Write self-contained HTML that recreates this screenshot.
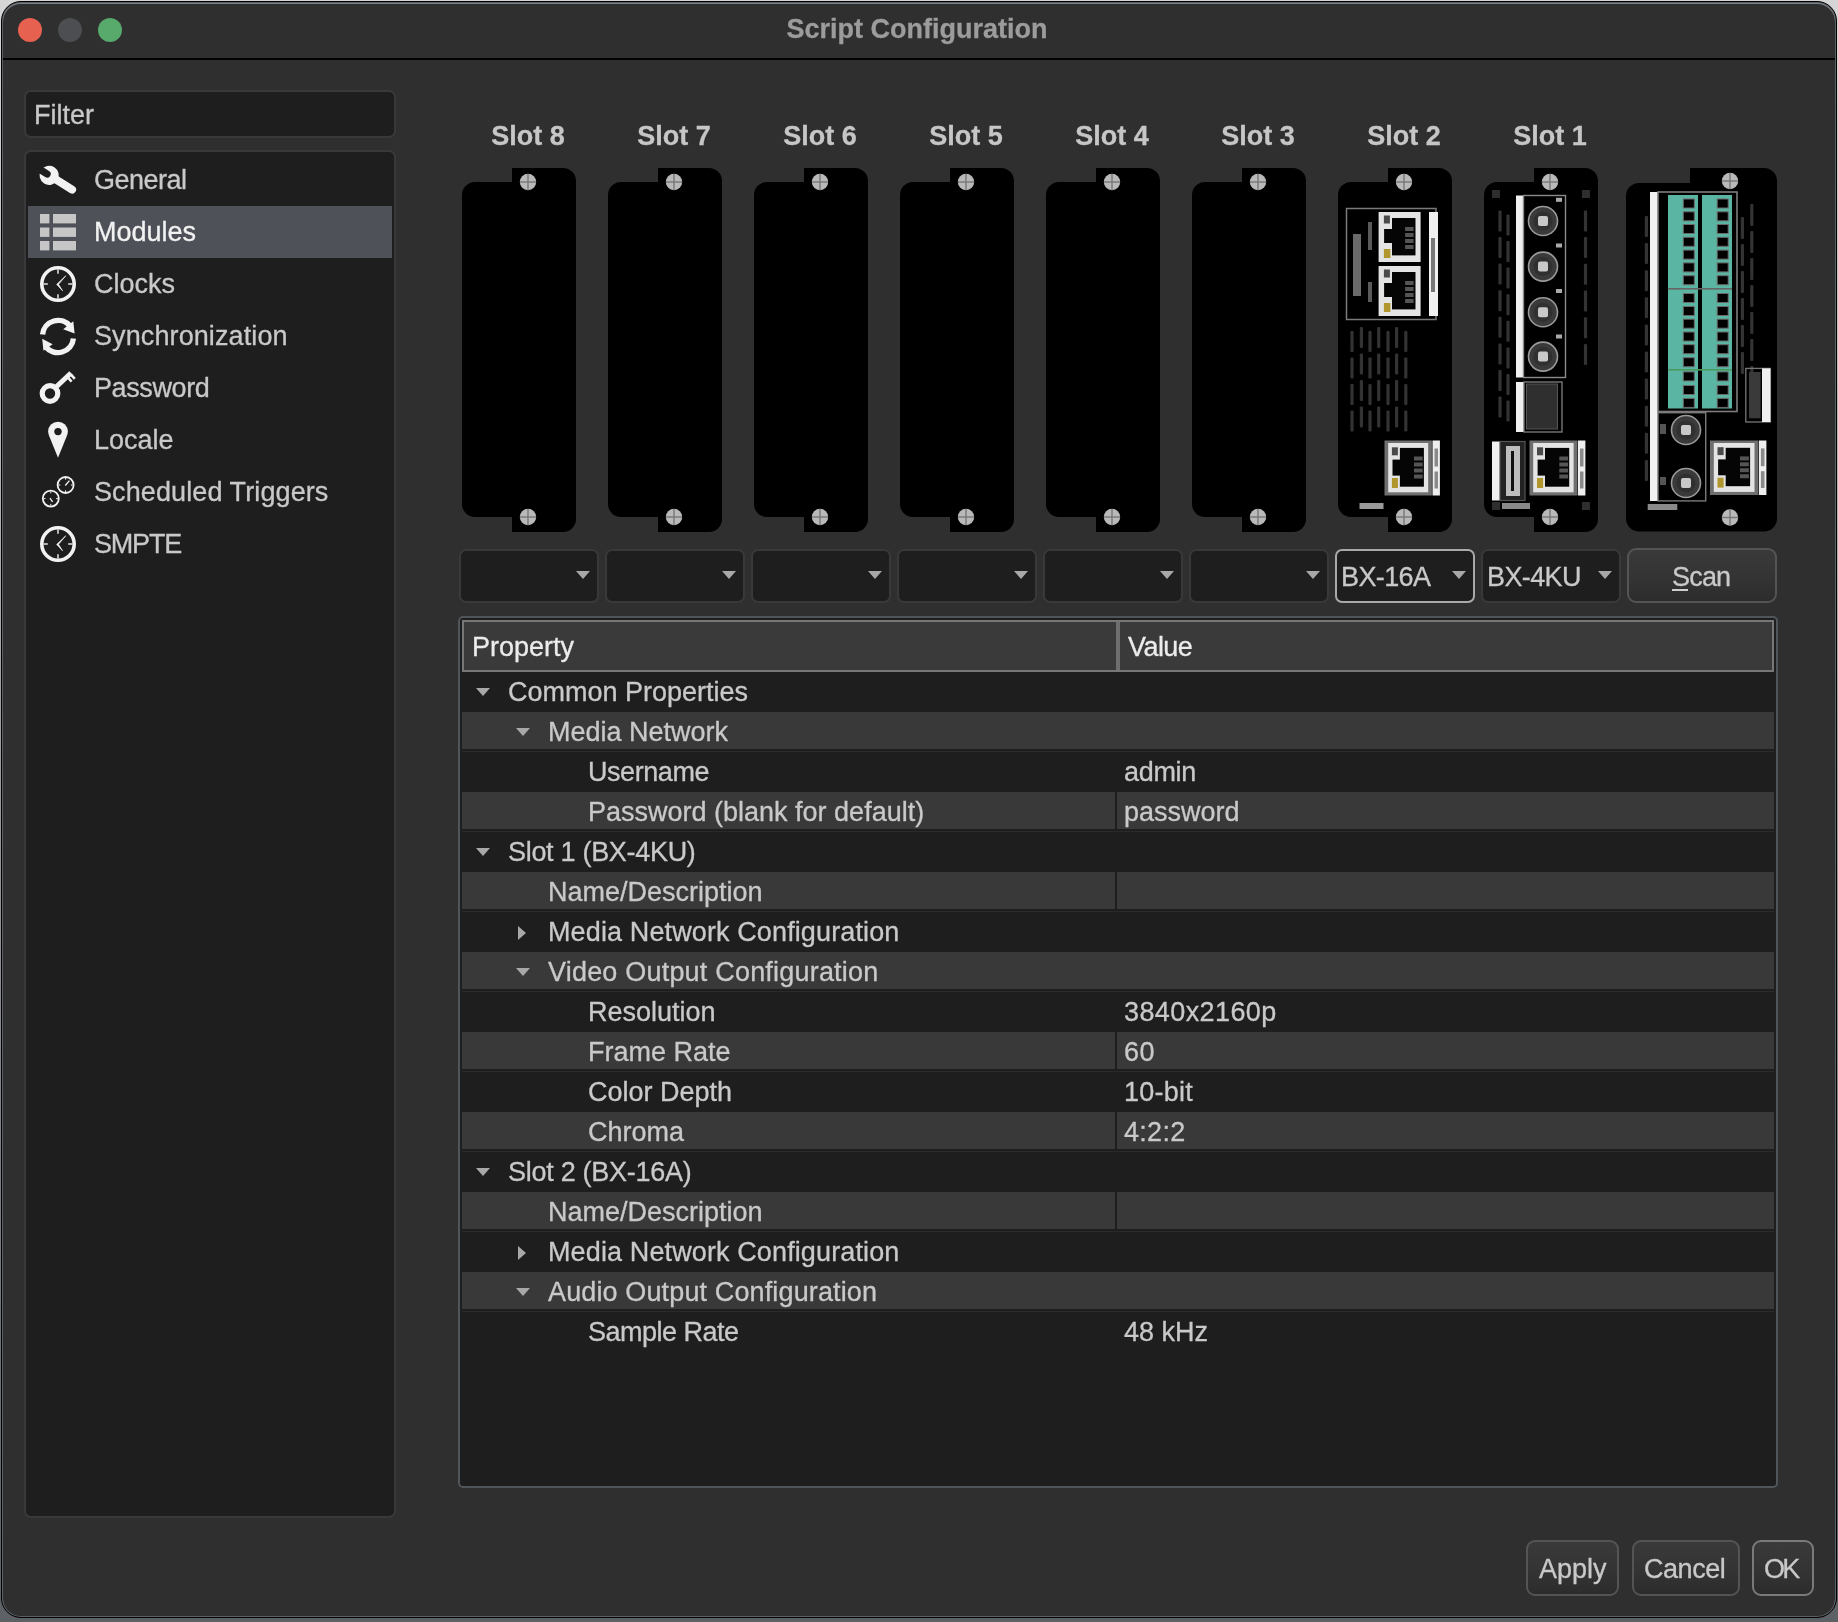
<!DOCTYPE html>
<html><head><meta charset="utf-8"><title>Script Configuration</title><style>
html,body{margin:0;padding:0;}
body{width:1838px;height:1622px;position:relative;overflow:hidden;background:linear-gradient(#d6d6d6,#9a9a9a 50%,#5d6166);font-family:"Liberation Sans", sans-serif;}
.t{position:absolute;white-space:nowrap;line-height:1;will-change:transform;-webkit-text-stroke:0.3px currentColor;}
.abs{position:absolute;}
#win{position:absolute;left:1px;top:1px;width:1834px;height:1615px;background:#2f2f2f;border:1px solid #000;border-radius:20px;box-shadow:inset 0 0 0 1px #5b6066, inset 0 1px 0 1px #7d8287;}
#titlesep{position:absolute;left:3px;top:58px;width:1832px;height:1.5px;background:#000;}
.tl{position:absolute;width:24px;height:24px;border-radius:50%;}
.box{position:absolute;background:#1e1e1e;border:2px solid #393939;}
.combo{position:absolute;width:136px;height:50px;background:#1e1e1e;border:2px solid #393939;border-radius:7px;}
.btn{position:absolute;background:linear-gradient(#3a3a3a,#333 60%,#2c2c2c);border:2px solid #545454;border-radius:9px;box-sizing:border-box;}
#tframe{position:absolute;left:458px;top:616px;width:1316px;height:868px;background:#1e1e1e;border:2px solid #50555a;border-radius:5px;}
#thead{position:absolute;left:462px;top:620px;width:1308px;height:48px;background:#3a3a3a;border:2px solid #777;}
.lrow{position:absolute;left:462px;width:1312px;height:37px;background:#393939;}
.fline{position:absolute;left:462px;width:1312px;height:1px;background:#2a2a2a;}
.cdiv{position:absolute;left:1115px;width:2px;height:37px;background:#1e1e1e;}
</style></head>
<body>
<div id="win"></div>
<div id="titlesep"></div>
<div class="tl" style="left:18px;top:18px;background:#e66150"></div>
<div class="tl" style="left:58px;top:18px;background:#4c4e52"></div>
<div class="tl" style="left:98px;top:18px;background:#58aa6c"></div>
<div class="t" style="left:667.0px;width:500px;text-align:center;top:16.1px;font-size:27px;color:#9c9c9c;font-weight:bold">Script Configuration</div>
<div class="box" style="left:24px;top:90px;width:368px;height:44px;border-radius:7px"></div>
<div class="t" style="left:34.3px;top:102.1px;font-size:27px;color:#c9c9c9;font-weight:normal;">Filter</div>
<div class="box" style="left:24px;top:150px;width:368px;height:1364px;border-radius:7px"></div>
<div style="position:absolute;left:28px;top:206px;width:364px;height:52px;background:#4e5258"></div>
<div class="t" style="left:94px;top:167.1px;font-size:27px;color:#c9c9c9;font-weight:normal;letter-spacing:-0.5px;">General</div>
<div class="t" style="left:94px;top:219.1px;font-size:27px;color:#f2f2f2;font-weight:normal;">Modules</div>
<div class="t" style="left:94px;top:271.1px;font-size:27px;color:#c9c9c9;font-weight:normal;">Clocks</div>
<div class="t" style="left:94px;top:323.1px;font-size:27px;color:#c9c9c9;font-weight:normal;letter-spacing:0.1px;">Synchronization</div>
<div class="t" style="left:94px;top:375.1px;font-size:27px;color:#c9c9c9;font-weight:normal;letter-spacing:-0.4px;">Password</div>
<div class="t" style="left:94px;top:427.1px;font-size:27px;color:#c9c9c9;font-weight:normal;">Locale</div>
<div class="t" style="left:94px;top:479.1px;font-size:27px;color:#c9c9c9;font-weight:normal;letter-spacing:0.1px;">Scheduled Triggers</div>
<div class="t" style="left:94px;top:531.1px;font-size:27px;color:#c9c9c9;font-weight:normal;letter-spacing:-1.2px;">SMPTE</div>
<svg class="abs" width="100" height="600" style="left:0;top:0"><g transform="translate(49.2,175.3) rotate(32)"><mask id="wm"><rect x="-20" y="-20" width="60" height="40" fill="#fff"/><path d="M-14,-3.6 L-2.5,-3.6 A3.6,3.6 0 0 1 -2.5,3.6 L-14,3.6 Z" fill="#000"/></mask><g mask="url(#wm)" fill="#f2f2f2"><circle cx="0" cy="0" r="9.6"/><rect x="0" y="-4" width="31" height="8" rx="4"/></g></g><rect x="40" y="214" width="9.4" height="9.4" fill="#c6c6c6"/><rect x="53" y="214" width="23" height="9.4" fill="#c6c6c6"/><rect x="40" y="227.5" width="9.4" height="9.4" fill="#c6c6c6"/><rect x="53" y="227.5" width="23" height="9.4" fill="#c6c6c6"/><rect x="40" y="241" width="9.4" height="9.4" fill="#c6c6c6"/><rect x="53" y="241" width="23" height="9.4" fill="#c6c6c6"/><circle cx="58" cy="284" r="16.2" fill="none" stroke="#f2f2f2" stroke-width="3.6"/><line x1="58.0" y1="269.6" x2="58.0" y2="273.8" stroke="#f2f2f2" stroke-width="1.4"/><line x1="72.4" y1="284.0" x2="68.2" y2="284.0" stroke="#f2f2f2" stroke-width="1.4"/><line x1="58.0" y1="298.4" x2="58.0" y2="294.2" stroke="#f2f2f2" stroke-width="1.4"/><line x1="43.6" y1="284.0" x2="47.8" y2="284.0" stroke="#f2f2f2" stroke-width="1.4"/><path d="M65.8,275.8 L56.7,284.4 L62.6,290.8 L58.5,284.3 Z" fill="#f2f2f2" stroke="#f2f2f2" stroke-width="0.7" stroke-linejoin="round"/><circle cx="58" cy="544" r="16.2" fill="none" stroke="#f2f2f2" stroke-width="3.6"/><line x1="58.0" y1="529.6" x2="58.0" y2="533.8" stroke="#f2f2f2" stroke-width="1.4"/><line x1="72.4" y1="544.0" x2="68.2" y2="544.0" stroke="#f2f2f2" stroke-width="1.4"/><line x1="58.0" y1="558.4" x2="58.0" y2="554.2" stroke="#f2f2f2" stroke-width="1.4"/><line x1="43.6" y1="544.0" x2="47.8" y2="544.0" stroke="#f2f2f2" stroke-width="1.4"/><path d="M65.8,535.8 L56.7,544.4 L62.6,550.8 L58.5,544.3 Z" fill="#f2f2f2" stroke="#f2f2f2" stroke-width="0.7" stroke-linejoin="round"/><path d="M42.6,334.5 A15.6,15.6 0 0 1 70.5,326.5" fill="none" stroke="#f2f2f2" stroke-width="5.4"/><path d="M63.2,329.2 L73.3,321.3 L74.6,333.4 Z" fill="#f2f2f2"/><path d="M73.4,338.5 A15.6,15.6 0 0 1 45.5,346.5" fill="none" stroke="#f2f2f2" stroke-width="5.4"/><path d="M52.6,344.2 L42.2,338.8 L43.5,350.8 Z" fill="#f2f2f2"/><circle cx="50" cy="393.5" r="7.8" fill="none" stroke="#f2f2f2" stroke-width="5.2"/><line x1="54.5" y1="388.5" x2="71" y2="373" stroke="#f2f2f2" stroke-width="5"/><line x1="67.6" y1="377.2" x2="71.6" y2="381.6" stroke="#f2f2f2" stroke-width="2.6"/><line x1="70.8" y1="374.4" x2="74.8" y2="378.8" stroke="#f2f2f2" stroke-width="2.6"/><mask id="pm"><rect x="30" y="410" width="60" height="60" fill="#fff"/><circle cx="58" cy="431.6" r="3.7" fill="#000"/></mask><g mask="url(#pm)" fill="#f2f2f2"><circle cx="58" cy="431.6" r="9.9"/><path d="M49.2,436 L58,457.8 L66.8,436 Z"/></g><circle cx="65.6" cy="485" r="8.0" fill="none" stroke="#f2f2f2" stroke-width="1.8"/><line x1="65.6" y1="477.9" x2="65.6" y2="479.7" stroke="#f2f2f2" stroke-width="1"/><line x1="72.69999999999999" y1="485.0" x2="70.89999999999999" y2="485.0" stroke="#f2f2f2" stroke-width="1"/><line x1="65.6" y1="492.1" x2="65.6" y2="490.3" stroke="#f2f2f2" stroke-width="1"/><line x1="58.49999999999999" y1="485.0" x2="60.3" y2="485.0" stroke="#f2f2f2" stroke-width="1"/><line x1="65.3" y1="485.5" x2="69.4" y2="480.6" stroke="#f2f2f2" stroke-width="1.3"/><circle cx="50.8" cy="498.6" r="8.0" fill="none" stroke="#f2f2f2" stroke-width="1.8"/><line x1="50.8" y1="491.5" x2="50.8" y2="493.3" stroke="#f2f2f2" stroke-width="1"/><line x1="57.9" y1="498.6" x2="56.099999999999994" y2="498.6" stroke="#f2f2f2" stroke-width="1"/><line x1="50.8" y1="505.70000000000005" x2="50.8" y2="503.90000000000003" stroke="#f2f2f2" stroke-width="1"/><line x1="43.699999999999996" y1="498.6" x2="45.5" y2="498.6" stroke="#f2f2f2" stroke-width="1"/><line x1="50.0" y1="498.2" x2="52.6" y2="501.8" stroke="#f2f2f2" stroke-width="1.3"/></svg>
<div class="t" style="left:458.0px;width:140px;text-align:center;top:123.1px;font-size:27px;color:#c6c6c6;font-weight:bold">Slot 8</div>
<div class="t" style="left:604.0px;width:140px;text-align:center;top:123.1px;font-size:27px;color:#c6c6c6;font-weight:bold">Slot 7</div>
<div class="t" style="left:750.0px;width:140px;text-align:center;top:123.1px;font-size:27px;color:#c6c6c6;font-weight:bold">Slot 6</div>
<div class="t" style="left:896.0px;width:140px;text-align:center;top:123.1px;font-size:27px;color:#c6c6c6;font-weight:bold">Slot 5</div>
<div class="t" style="left:1042.0px;width:140px;text-align:center;top:123.1px;font-size:27px;color:#c6c6c6;font-weight:bold">Slot 4</div>
<div class="t" style="left:1188.0px;width:140px;text-align:center;top:123.1px;font-size:27px;color:#c6c6c6;font-weight:bold">Slot 3</div>
<div class="t" style="left:1334.0px;width:140px;text-align:center;top:123.1px;font-size:27px;color:#c6c6c6;font-weight:bold">Slot 2</div>
<div class="t" style="left:1480.0px;width:140px;text-align:center;top:123.1px;font-size:27px;color:#c6c6c6;font-weight:bold">Slot 1</div>
<svg class="abs" width="1838" height="560" style="left:0;top:0"><path d="M462,195 A13,13 0 0 1 475,182 L512,182 L512,168 L563,168 A13,13 0 0 1 576,181 L576,519 A13,13 0 0 1 563,532 L512,532 L512,517 L475,517 A13,13 0 0 1 462,504 Z" fill="#000"/><circle cx="528" cy="182" r="8.2" fill="#b9b9b9"/><line x1="520" y1="182" x2="536" y2="182" stroke="#777" stroke-width="1.4"/><line x1="528" y1="174" x2="528" y2="190" stroke="#777" stroke-width="1.4"/><circle cx="528" cy="517" r="8.2" fill="#b9b9b9"/><line x1="520" y1="517" x2="536" y2="517" stroke="#777" stroke-width="1.4"/><line x1="528" y1="509" x2="528" y2="525" stroke="#777" stroke-width="1.4"/><path d="M608,195 A13,13 0 0 1 621,182 L658,182 L658,168 L709,168 A13,13 0 0 1 722,181 L722,519 A13,13 0 0 1 709,532 L658,532 L658,517 L621,517 A13,13 0 0 1 608,504 Z" fill="#000"/><circle cx="674" cy="182" r="8.2" fill="#b9b9b9"/><line x1="666" y1="182" x2="682" y2="182" stroke="#777" stroke-width="1.4"/><line x1="674" y1="174" x2="674" y2="190" stroke="#777" stroke-width="1.4"/><circle cx="674" cy="517" r="8.2" fill="#b9b9b9"/><line x1="666" y1="517" x2="682" y2="517" stroke="#777" stroke-width="1.4"/><line x1="674" y1="509" x2="674" y2="525" stroke="#777" stroke-width="1.4"/><path d="M754,195 A13,13 0 0 1 767,182 L804,182 L804,168 L855,168 A13,13 0 0 1 868,181 L868,519 A13,13 0 0 1 855,532 L804,532 L804,517 L767,517 A13,13 0 0 1 754,504 Z" fill="#000"/><circle cx="820" cy="182" r="8.2" fill="#b9b9b9"/><line x1="812" y1="182" x2="828" y2="182" stroke="#777" stroke-width="1.4"/><line x1="820" y1="174" x2="820" y2="190" stroke="#777" stroke-width="1.4"/><circle cx="820" cy="517" r="8.2" fill="#b9b9b9"/><line x1="812" y1="517" x2="828" y2="517" stroke="#777" stroke-width="1.4"/><line x1="820" y1="509" x2="820" y2="525" stroke="#777" stroke-width="1.4"/><path d="M900,195 A13,13 0 0 1 913,182 L950,182 L950,168 L1001,168 A13,13 0 0 1 1014,181 L1014,519 A13,13 0 0 1 1001,532 L950,532 L950,517 L913,517 A13,13 0 0 1 900,504 Z" fill="#000"/><circle cx="966" cy="182" r="8.2" fill="#b9b9b9"/><line x1="958" y1="182" x2="974" y2="182" stroke="#777" stroke-width="1.4"/><line x1="966" y1="174" x2="966" y2="190" stroke="#777" stroke-width="1.4"/><circle cx="966" cy="517" r="8.2" fill="#b9b9b9"/><line x1="958" y1="517" x2="974" y2="517" stroke="#777" stroke-width="1.4"/><line x1="966" y1="509" x2="966" y2="525" stroke="#777" stroke-width="1.4"/><path d="M1046,195 A13,13 0 0 1 1059,182 L1096,182 L1096,168 L1147,168 A13,13 0 0 1 1160,181 L1160,519 A13,13 0 0 1 1147,532 L1096,532 L1096,517 L1059,517 A13,13 0 0 1 1046,504 Z" fill="#000"/><circle cx="1112" cy="182" r="8.2" fill="#b9b9b9"/><line x1="1104" y1="182" x2="1120" y2="182" stroke="#777" stroke-width="1.4"/><line x1="1112" y1="174" x2="1112" y2="190" stroke="#777" stroke-width="1.4"/><circle cx="1112" cy="517" r="8.2" fill="#b9b9b9"/><line x1="1104" y1="517" x2="1120" y2="517" stroke="#777" stroke-width="1.4"/><line x1="1112" y1="509" x2="1112" y2="525" stroke="#777" stroke-width="1.4"/><path d="M1192,195 A13,13 0 0 1 1205,182 L1242,182 L1242,168 L1293,168 A13,13 0 0 1 1306,181 L1306,519 A13,13 0 0 1 1293,532 L1242,532 L1242,517 L1205,517 A13,13 0 0 1 1192,504 Z" fill="#000"/><circle cx="1258" cy="182" r="8.2" fill="#b9b9b9"/><line x1="1250" y1="182" x2="1266" y2="182" stroke="#777" stroke-width="1.4"/><line x1="1258" y1="174" x2="1258" y2="190" stroke="#777" stroke-width="1.4"/><circle cx="1258" cy="517" r="8.2" fill="#b9b9b9"/><line x1="1250" y1="517" x2="1266" y2="517" stroke="#777" stroke-width="1.4"/><line x1="1258" y1="509" x2="1258" y2="525" stroke="#777" stroke-width="1.4"/><path d="M1338,195 A13,13 0 0 1 1351,182 L1388,182 L1388,168 L1439,168 A13,13 0 0 1 1452,181 L1452,519 A13,13 0 0 1 1439,532 L1388,532 L1388,517 L1351,517 A13,13 0 0 1 1338,504 Z" fill="#000"/><circle cx="1404" cy="182" r="8.2" fill="#b9b9b9"/><line x1="1396" y1="182" x2="1412" y2="182" stroke="#777" stroke-width="1.4"/><line x1="1404" y1="174" x2="1404" y2="190" stroke="#777" stroke-width="1.4"/><circle cx="1404" cy="517" r="8.2" fill="#b9b9b9"/><line x1="1396" y1="517" x2="1412" y2="517" stroke="#777" stroke-width="1.4"/><line x1="1404" y1="509" x2="1404" y2="525" stroke="#777" stroke-width="1.4"/><path d="M1484,195 A13,13 0 0 1 1497,182 L1534,182 L1534,168 L1585,168 A13,13 0 0 1 1598,181 L1598,519 A13,13 0 0 1 1585,532 L1534,532 L1534,517 L1497,517 A13,13 0 0 1 1484,504 Z" fill="#000"/><circle cx="1550" cy="182" r="8.2" fill="#b9b9b9"/><line x1="1542" y1="182" x2="1558" y2="182" stroke="#777" stroke-width="1.4"/><line x1="1550" y1="174" x2="1550" y2="190" stroke="#777" stroke-width="1.4"/><circle cx="1550" cy="517" r="8.2" fill="#b9b9b9"/><line x1="1542" y1="517" x2="1558" y2="517" stroke="#777" stroke-width="1.4"/><line x1="1550" y1="509" x2="1550" y2="525" stroke="#777" stroke-width="1.4"/><rect x="1346.5" y="208.5" width="89.5" height="111" fill="none" stroke="#7a7a7a" stroke-width="1.5"/><rect x="1378.6" y="212.0" width="42.0" height="50.0" fill="#e4e4e4"/><rect x="1380.1" y="213.5" width="39.0" height="47.0" fill="none"/><rect x="1392.0" y="218.0" width="23.5" height="37.4" fill="#050505"/><rect x="1384.1" y="229.0" width="8.0" height="14.0" fill="#050505"/><rect x="1383.9" y="249.0" width="6.5" height="9.0" fill="#b0962c"/><rect x="1383.9" y="215.5" width="6.0" height="8.0" fill="#4a4a4a"/><rect x="1405.1" y="227.0" width="8.5" height="4.0" fill="#555"/><rect x="1405.1" y="233.0" width="8.5" height="4.0" fill="#555"/><rect x="1405.1" y="239.0" width="8.5" height="4.0" fill="#555"/><rect x="1405.1" y="245.0" width="8.5" height="4.0" fill="#555"/><rect x="1378.6" y="266.0" width="42.0" height="50.0" fill="#e4e4e4"/><rect x="1380.1" y="267.5" width="39.0" height="47.0" fill="none"/><rect x="1392.0" y="272.0" width="23.5" height="37.4" fill="#050505"/><rect x="1384.1" y="283.0" width="8.0" height="14.0" fill="#050505"/><rect x="1383.9" y="303.0" width="6.5" height="9.0" fill="#b0962c"/><rect x="1383.9" y="269.5" width="6.0" height="8.0" fill="#4a4a4a"/><rect x="1405.1" y="281.0" width="8.5" height="4.0" fill="#555"/><rect x="1405.1" y="287.0" width="8.5" height="4.0" fill="#555"/><rect x="1405.1" y="293.0" width="8.5" height="4.0" fill="#555"/><rect x="1405.1" y="299.0" width="8.5" height="4.0" fill="#555"/><rect x="1429" y="212" width="9" height="104" fill="#f0f0f0"/><rect x="1431" y="238" width="4" height="54" fill="#777"/><rect x="1353" y="234" width="8" height="62" fill="#6a6a6a"/><rect x="1368" y="222" width="4" height="28" fill="#5a5a5a"/><rect x="1368" y="282" width="4" height="20" fill="#5a5a5a"/><rect x="1350.4" y="331.0" width="3.2" height="21" rx="1" fill="#333"/><rect x="1350.4" y="357.5" width="3.2" height="21" rx="1" fill="#333"/><rect x="1350.4" y="384.0" width="3.2" height="21" rx="1" fill="#333"/><rect x="1350.4" y="410.5" width="3.2" height="21" rx="1" fill="#333"/><rect x="1359.8000000000002" y="327.0" width="3.2" height="21" rx="1" fill="#333"/><rect x="1359.8000000000002" y="353.5" width="3.2" height="21" rx="1" fill="#333"/><rect x="1359.8000000000002" y="380.0" width="3.2" height="21" rx="1" fill="#333"/><rect x="1359.8000000000002" y="406.5" width="3.2" height="21" rx="1" fill="#333"/><rect x="1368.4" y="331.0" width="3.2" height="21" rx="1" fill="#333"/><rect x="1368.4" y="357.5" width="3.2" height="21" rx="1" fill="#333"/><rect x="1368.4" y="384.0" width="3.2" height="21" rx="1" fill="#333"/><rect x="1368.4" y="410.5" width="3.2" height="21" rx="1" fill="#333"/><rect x="1377.1000000000001" y="327.0" width="3.2" height="21" rx="1" fill="#333"/><rect x="1377.1000000000001" y="353.5" width="3.2" height="21" rx="1" fill="#333"/><rect x="1377.1000000000001" y="380.0" width="3.2" height="21" rx="1" fill="#333"/><rect x="1377.1000000000001" y="406.5" width="3.2" height="21" rx="1" fill="#333"/><rect x="1386.4" y="331.0" width="3.2" height="21" rx="1" fill="#333"/><rect x="1386.4" y="357.5" width="3.2" height="21" rx="1" fill="#333"/><rect x="1386.4" y="384.0" width="3.2" height="21" rx="1" fill="#333"/><rect x="1386.4" y="410.5" width="3.2" height="21" rx="1" fill="#333"/><rect x="1395.0" y="327.0" width="3.2" height="21" rx="1" fill="#333"/><rect x="1395.0" y="353.5" width="3.2" height="21" rx="1" fill="#333"/><rect x="1395.0" y="380.0" width="3.2" height="21" rx="1" fill="#333"/><rect x="1395.0" y="406.5" width="3.2" height="21" rx="1" fill="#333"/><rect x="1404.2" y="331.0" width="3.2" height="21" rx="1" fill="#333"/><rect x="1404.2" y="357.5" width="3.2" height="21" rx="1" fill="#333"/><rect x="1404.2" y="384.0" width="3.2" height="21" rx="1" fill="#333"/><rect x="1404.2" y="410.5" width="3.2" height="21" rx="1" fill="#333"/><rect x="1384.5" y="440.5" width="47.4" height="55.0" fill="#6f6f6f"/><rect x="1388.2" y="443.0" width="40.0" height="49.3" fill="#e4e4e4"/><rect x="1399.9" y="447.9" width="24.0" height="38.8" fill="#050505"/><rect x="1392.5" y="459.6" width="8.0" height="16.0" fill="#050505"/><rect x="1391.9" y="478.0" width="6.0" height="10.0" fill="#b0962c"/><rect x="1391.9" y="447.3" width="6.0" height="8.0" fill="#4a4a4a"/><rect x="1414.0" y="456.5" width="8.7" height="4.0" fill="#555"/><rect x="1414.0" y="462.5" width="8.7" height="4.0" fill="#555"/><rect x="1414.0" y="468.5" width="8.7" height="4.0" fill="#555"/><rect x="1414.0" y="474.5" width="8.7" height="4.0" fill="#555"/><rect x="1432.5" y="440.5" width="7.4" height="55.0" fill="#eeeeee"/><rect x="1434.5" y="448.5" width="3.5" height="18.0" fill="#8a8a8a"/><rect x="1434.5" y="471.5" width="3.5" height="17.0" fill="#8a8a8a"/><rect x="1359.5" y="503" width="24" height="6" fill="#9a9a9a"/><rect x="1492" y="190" width="8" height="8" fill="#2e2e2e"/><rect x="1582" y="190" width="8" height="8" fill="#2e2e2e"/><rect x="1492" y="502" width="8" height="8" fill="#2e2e2e"/><rect x="1582" y="502" width="8" height="8" fill="#2e2e2e"/><rect x="1516" y="195.5" width="7.5" height="182" fill="#f0f0f0"/><rect x="1523.5" y="195.5" width="42" height="182" fill="none" stroke="#8a8a8a" stroke-width="1.4"/><circle cx="1543" cy="221" r="14.5" fill="#3a3a3a" stroke="#9a9a9a" stroke-width="1.6"/><circle cx="1543" cy="221" r="9.5" fill="#303030"/><rect x="1538" y="216" width="10" height="10" rx="2" fill="#c8c8c8"/><circle cx="1543" cy="266.6" r="14.5" fill="#3a3a3a" stroke="#9a9a9a" stroke-width="1.6"/><circle cx="1543" cy="266.6" r="9.5" fill="#303030"/><rect x="1538" y="261.6" width="10" height="10" rx="2" fill="#c8c8c8"/><circle cx="1543" cy="312.2" r="14.5" fill="#3a3a3a" stroke="#9a9a9a" stroke-width="1.6"/><circle cx="1543" cy="312.2" r="9.5" fill="#303030"/><rect x="1538" y="307.2" width="10" height="10" rx="2" fill="#c8c8c8"/><circle cx="1543" cy="356.6" r="14.5" fill="#3a3a3a" stroke="#9a9a9a" stroke-width="1.6"/><circle cx="1543" cy="356.6" r="9.5" fill="#303030"/><rect x="1538" y="351.6" width="10" height="10" rx="2" fill="#c8c8c8"/><rect x="1556" y="197.8" width="6" height="4" fill="#aaa"/><rect x="1556" y="243.5" width="6" height="4" fill="#aaa"/><rect x="1556" y="289" width="6" height="4" fill="#aaa"/><rect x="1556" y="334.5" width="6" height="4" fill="#aaa"/><rect x="1498.4" y="210.4" width="3.2" height="21" rx="1" fill="#333"/><rect x="1498.4" y="237.0" width="3.2" height="21" rx="1" fill="#333"/><rect x="1498.4" y="263.6" width="3.2" height="21" rx="1" fill="#333"/><rect x="1498.4" y="290.20000000000005" width="3.2" height="21" rx="1" fill="#333"/><rect x="1498.4" y="316.8" width="3.2" height="21" rx="1" fill="#333"/><rect x="1498.4" y="343.4" width="3.2" height="21" rx="1" fill="#333"/><rect x="1498.4" y="370.0" width="3.2" height="21" rx="1" fill="#333"/><rect x="1498.4" y="396.6" width="3.2" height="21" rx="1" fill="#333"/><rect x="1506.4" y="214.4" width="3.2" height="21" rx="1" fill="#333"/><rect x="1506.4" y="241.0" width="3.2" height="21" rx="1" fill="#333"/><rect x="1506.4" y="267.6" width="3.2" height="21" rx="1" fill="#333"/><rect x="1506.4" y="294.20000000000005" width="3.2" height="21" rx="1" fill="#333"/><rect x="1506.4" y="320.8" width="3.2" height="21" rx="1" fill="#333"/><rect x="1506.4" y="347.4" width="3.2" height="21" rx="1" fill="#333"/><rect x="1506.4" y="374.0" width="3.2" height="21" rx="1" fill="#333"/><rect x="1506.4" y="400.6" width="3.2" height="21" rx="1" fill="#333"/><rect x="1583.9" y="210.4" width="3.2" height="21" rx="1" fill="#333"/><rect x="1583.9" y="237.1" width="3.2" height="21" rx="1" fill="#333"/><rect x="1583.9" y="263.8" width="3.2" height="21" rx="1" fill="#333"/><rect x="1583.9" y="290.5" width="3.2" height="21" rx="1" fill="#333"/><rect x="1583.9" y="317.2" width="3.2" height="21" rx="1" fill="#333"/><rect x="1583.9" y="343.9" width="3.2" height="21" rx="1" fill="#333"/><rect x="1516" y="382" width="8" height="50" fill="#f0f0f0"/><rect x="1524" y="382" width="38" height="50" fill="none" stroke="#777" stroke-width="1.4"/><rect x="1526.5" y="384" width="31" height="45" fill="#2f2f2f" stroke="#555" stroke-width="1"/><rect x="1492" y="441.5" width="8" height="59" fill="#f0f0f0"/><rect x="1500" y="441.5" width="25" height="59" fill="#222" stroke="#555" stroke-width="1.2"/><rect x="1506" y="446" width="14" height="50" fill="#bdbdbd"/><rect x="1511" y="451" width="3" height="40" fill="#111"/><rect x="1529.5" y="440.5" width="47.8" height="55.0" fill="#6f6f6f"/><rect x="1533.2" y="443.0" width="40.4" height="49.3" fill="#e4e4e4"/><rect x="1545.0" y="447.9" width="24.2" height="38.8" fill="#050505"/><rect x="1537.6" y="459.6" width="8.1" height="16.0" fill="#050505"/><rect x="1537.0" y="478.0" width="6.1" height="10.0" fill="#b0962c"/><rect x="1537.0" y="447.3" width="6.1" height="8.0" fill="#4a4a4a"/><rect x="1559.3" y="456.5" width="8.8" height="4.0" fill="#555"/><rect x="1559.3" y="462.5" width="8.8" height="4.0" fill="#555"/><rect x="1559.3" y="468.5" width="8.8" height="4.0" fill="#555"/><rect x="1559.3" y="474.5" width="8.8" height="4.0" fill="#555"/><rect x="1577.9" y="440.5" width="7.5" height="55.0" fill="#eeeeee"/><rect x="1580.0" y="448.5" width="3.5" height="18.0" fill="#8a8a8a"/><rect x="1580.0" y="471.5" width="3.5" height="17.0" fill="#8a8a8a"/><rect x="1502" y="503" width="28" height="6" fill="#888"/><path d="M1626,196 A13,13 0 0 1 1639,183 L1690,183 L1690,168 L1764,168 A13,13 0 0 1 1777,181 L1777,518.5 A13,13 0 0 1 1764,531.5 L1639,531.5 A13,13 0 0 1 1626,518.5 Z" fill="#000"/><circle cx="1730" cy="181" r="8.2" fill="#b9b9b9"/><line x1="1722" y1="181" x2="1738" y2="181" stroke="#777" stroke-width="1.4"/><line x1="1730" y1="173" x2="1730" y2="189" stroke="#777" stroke-width="1.4"/><circle cx="1730" cy="517.5" r="8.2" fill="#b9b9b9"/><line x1="1722" y1="517.5" x2="1738" y2="517.5" stroke="#777" stroke-width="1.4"/><line x1="1730" y1="509.5" x2="1730" y2="525.5" stroke="#777" stroke-width="1.4"/><rect x="1650" y="192" width="8" height="309" fill="#f2f2f2"/><rect x="1658" y="192" width="79" height="219.5" fill="none" stroke="#7d7d7d" stroke-width="1.6"/><rect x="1668" y="195" width="30" height="213.5" fill="#5bb5a3"/><rect x="1702" y="195" width="30" height="213.5" fill="#5bb5a3"/><rect x="1668" y="288" width="64" height="1.6" fill="#666"/><rect x="1668" y="369" width="64" height="1.6" fill="#4a9a60"/><rect x="1683.3" y="199.0" width="11" height="9" fill="#000" stroke="#6b6b6b" stroke-width="1"/><rect x="1717.2" y="199.0" width="11" height="9" fill="#000" stroke="#6b6b6b" stroke-width="1"/><rect x="1683.3" y="211.8" width="11" height="9" fill="#000" stroke="#6b6b6b" stroke-width="1"/><rect x="1717.2" y="211.8" width="11" height="9" fill="#000" stroke="#6b6b6b" stroke-width="1"/><rect x="1683.3" y="224.5" width="11" height="9" fill="#000" stroke="#6b6b6b" stroke-width="1"/><rect x="1717.2" y="224.5" width="11" height="9" fill="#000" stroke="#6b6b6b" stroke-width="1"/><rect x="1683.3" y="237.3" width="11" height="9" fill="#000" stroke="#6b6b6b" stroke-width="1"/><rect x="1717.2" y="237.3" width="11" height="9" fill="#000" stroke="#6b6b6b" stroke-width="1"/><rect x="1683.3" y="250.1" width="11" height="9" fill="#000" stroke="#6b6b6b" stroke-width="1"/><rect x="1717.2" y="250.1" width="11" height="9" fill="#000" stroke="#6b6b6b" stroke-width="1"/><rect x="1683.3" y="262.9" width="11" height="9" fill="#000" stroke="#6b6b6b" stroke-width="1"/><rect x="1717.2" y="262.9" width="11" height="9" fill="#000" stroke="#6b6b6b" stroke-width="1"/><rect x="1683.3" y="275.7" width="11" height="9" fill="#000" stroke="#6b6b6b" stroke-width="1"/><rect x="1717.2" y="275.7" width="11" height="9" fill="#000" stroke="#6b6b6b" stroke-width="1"/><rect x="1683.3" y="293.5" width="11" height="9" fill="#000" stroke="#6b6b6b" stroke-width="1"/><rect x="1717.2" y="293.5" width="11" height="9" fill="#000" stroke="#6b6b6b" stroke-width="1"/><rect x="1683.3" y="306.5" width="11" height="9" fill="#000" stroke="#6b6b6b" stroke-width="1"/><rect x="1717.2" y="306.5" width="11" height="9" fill="#000" stroke="#6b6b6b" stroke-width="1"/><rect x="1683.3" y="319.2" width="11" height="9" fill="#000" stroke="#6b6b6b" stroke-width="1"/><rect x="1717.2" y="319.2" width="11" height="9" fill="#000" stroke="#6b6b6b" stroke-width="1"/><rect x="1683.3" y="332.0" width="11" height="9" fill="#000" stroke="#6b6b6b" stroke-width="1"/><rect x="1717.2" y="332.0" width="11" height="9" fill="#000" stroke="#6b6b6b" stroke-width="1"/><rect x="1683.3" y="344.7" width="11" height="9" fill="#000" stroke="#6b6b6b" stroke-width="1"/><rect x="1717.2" y="344.7" width="11" height="9" fill="#000" stroke="#6b6b6b" stroke-width="1"/><rect x="1683.3" y="357.7" width="11" height="9" fill="#000" stroke="#6b6b6b" stroke-width="1"/><rect x="1717.2" y="357.7" width="11" height="9" fill="#000" stroke="#6b6b6b" stroke-width="1"/><rect x="1683.3" y="371.9" width="11" height="9" fill="#000" stroke="#6b6b6b" stroke-width="1"/><rect x="1717.2" y="371.9" width="11" height="9" fill="#000" stroke="#6b6b6b" stroke-width="1"/><rect x="1683.3" y="385.5" width="11" height="9" fill="#000" stroke="#6b6b6b" stroke-width="1"/><rect x="1717.2" y="385.5" width="11" height="9" fill="#000" stroke="#6b6b6b" stroke-width="1"/><rect x="1683.3" y="398.4" width="11" height="9" fill="#000" stroke="#6b6b6b" stroke-width="1"/><rect x="1717.2" y="398.4" width="11" height="9" fill="#000" stroke="#6b6b6b" stroke-width="1"/><rect x="1644.8000000000002" y="216.0" width="3.2" height="21" rx="1" fill="#333"/><rect x="1644.8000000000002" y="243.1" width="3.2" height="21" rx="1" fill="#333"/><rect x="1644.8000000000002" y="270.2" width="3.2" height="21" rx="1" fill="#333"/><rect x="1644.8000000000002" y="297.3" width="3.2" height="21" rx="1" fill="#333"/><rect x="1644.8000000000002" y="324.4" width="3.2" height="21" rx="1" fill="#333"/><rect x="1644.8000000000002" y="351.5" width="3.2" height="21" rx="1" fill="#333"/><rect x="1644.8000000000002" y="378.6" width="3.2" height="21" rx="1" fill="#333"/><rect x="1644.8000000000002" y="405.70000000000005" width="3.2" height="21" rx="1" fill="#333"/><rect x="1644.8000000000002" y="432.8" width="3.2" height="21" rx="1" fill="#333"/><rect x="1644.8000000000002" y="459.9" width="3.2" height="21" rx="1" fill="#333"/><rect x="1740.8000000000002" y="217" width="3.2" height="22" rx="1" fill="#333"/><rect x="1740.8000000000002" y="244" width="3.2" height="22" rx="1" fill="#333"/><rect x="1740.8000000000002" y="271" width="3.2" height="22" rx="1" fill="#333"/><rect x="1740.8000000000002" y="298" width="3.2" height="22" rx="1" fill="#333"/><rect x="1740.8000000000002" y="325" width="3.2" height="22" rx="1" fill="#333"/><rect x="1740.8000000000002" y="352" width="3.2" height="22" rx="1" fill="#333"/><rect x="1750.2" y="204" width="3.2" height="22" rx="1" fill="#333"/><rect x="1750.2" y="231" width="3.2" height="22" rx="1" fill="#333"/><rect x="1750.2" y="258" width="3.2" height="22" rx="1" fill="#333"/><rect x="1750.2" y="285" width="3.2" height="22" rx="1" fill="#333"/><rect x="1750.2" y="312" width="3.2" height="22" rx="1" fill="#333"/><rect x="1750.2" y="339" width="3.2" height="22" rx="1" fill="#333"/><rect x="1750.2" y="366" width="3.2" height="22" rx="1" fill="#333"/><rect x="1745.8" y="368.4" width="24.6" height="53.6" fill="none" stroke="#777" stroke-width="1.3"/><rect x="1762" y="368.4" width="8.4" height="53.6" fill="#f0f0f0"/><rect x="1749" y="372" width="11.6" height="46.3" fill="#3a3a3a"/><rect x="1658" y="412.7" width="47.7" height="88.2" fill="none" stroke="#7a7a7a" stroke-width="1.4"/><circle cx="1686" cy="430" r="14.5" fill="#3a3a3a" stroke="#9a9a9a" stroke-width="1.6"/><circle cx="1686" cy="430" r="9.5" fill="#303030"/><rect x="1681" y="425" width="10" height="10" rx="2" fill="#c8c8c8"/><circle cx="1686" cy="483" r="14.5" fill="#3a3a3a" stroke="#9a9a9a" stroke-width="1.6"/><circle cx="1686" cy="483" r="9.5" fill="#303030"/><rect x="1681" y="478" width="10" height="10" rx="2" fill="#c8c8c8"/><rect x="1660" y="424" width="6" height="10" fill="#555"/><rect x="1660" y="477" width="6" height="8" fill="#555"/><rect x="1710.0" y="440.5" width="48.3" height="54.5" fill="#6f6f6f"/><rect x="1713.8" y="443.0" width="40.7" height="48.9" fill="#e4e4e4"/><rect x="1725.7" y="447.8" width="24.4" height="38.4" fill="#050505"/><rect x="1718.1" y="459.4" width="8.1" height="15.9" fill="#050505"/><rect x="1717.5" y="477.7" width="6.1" height="9.9" fill="#b0962c"/><rect x="1717.5" y="447.2" width="6.1" height="7.9" fill="#4a4a4a"/><rect x="1740.0" y="456.4" width="8.9" height="4.0" fill="#555"/><rect x="1740.0" y="462.3" width="8.9" height="4.0" fill="#555"/><rect x="1740.0" y="468.2" width="8.9" height="4.0" fill="#555"/><rect x="1740.0" y="474.2" width="8.9" height="4.0" fill="#555"/><rect x="1758.9" y="440.5" width="7.5" height="54.5" fill="#eeeeee"/><rect x="1760.9" y="448.4" width="3.6" height="17.8" fill="#8a8a8a"/><rect x="1760.9" y="471.2" width="3.6" height="16.8" fill="#8a8a8a"/><rect x="1647.7" y="504" width="29.6" height="6" fill="#8a8a8a"/></svg>
<div class="combo" style="left:459px;top:549px"></div>
<div class="combo" style="left:605px;top:549px"></div>
<div class="combo" style="left:751px;top:549px"></div>
<div class="combo" style="left:897px;top:549px"></div>
<div class="combo" style="left:1043px;top:549px"></div>
<div class="combo" style="left:1189px;top:549px"></div>
<div class="combo" style="left:1335px;top:549px;border-color:#a9a9a9"></div>
<div class="combo" style="left:1481px;top:549px"></div>
<div class="t" style="left:1341px;top:564.1px;font-size:27px;color:#c9c9c9;font-weight:normal;letter-spacing:-0.6px">BX-16A</div>
<div class="t" style="left:1487px;top:564.1px;font-size:27px;color:#c9c9c9;font-weight:normal;letter-spacing:-0.6px">BX-4KU</div>
<div class="btn" style="left:1627px;top:548px;width:150px;height:55px"></div>
<div class="t" style="left:1672px;top:564.1px;font-size:27px;color:#c9c9c9;font-weight:normal;letter-spacing:-0.8px">Scan</div>
<div style="position:absolute;left:1672px;top:589px;width:16px;height:2px;background:#cfcfcf"></div>
<div id="tframe"></div>
<div id="thead"></div>
<div style="position:absolute;left:1116px;top:622px;width:4px;height:48px;background:#6f6f6f"></div>
<div class="t" style="left:472px;top:634.1px;font-size:27px;color:#ececec;font-weight:normal;">Property</div>
<div class="t" style="left:1128px;top:634.1px;font-size:27px;color:#ececec;font-weight:normal;letter-spacing:-0.55px;">Value</div>
<div class="t" style="left:508px;top:679.1px;font-size:27px;color:#c9c9c9;font-weight:normal;">Common Properties</div>
<div class="lrow" style="top:712px"></div>
<div class="fline" style="top:751px"></div>
<div class="t" style="left:548px;top:719.1px;font-size:27px;color:#c9c9c9;font-weight:normal;">Media Network</div>
<div class="t" style="left:588px;top:759.1px;font-size:27px;color:#c9c9c9;font-weight:normal;letter-spacing:-0.44px;">Username</div>
<div class="t" style="left:1124px;top:759.1px;font-size:27px;color:#c9c9c9;font-weight:normal;letter-spacing:-0.3px;">admin</div>
<div class="lrow" style="top:792px"></div>
<div class="fline" style="top:831px"></div>
<div class="cdiv" style="top:792px"></div>
<div class="t" style="left:588px;top:799.1px;font-size:27px;color:#c9c9c9;font-weight:normal;">Password (blank for default)</div>
<div class="t" style="left:1124px;top:799.1px;font-size:27px;color:#c9c9c9;font-weight:normal;">password</div>
<div class="t" style="left:508px;top:839.1px;font-size:27px;color:#c9c9c9;font-weight:normal;letter-spacing:-0.3px;">Slot 1 (BX-4KU)</div>
<div class="lrow" style="top:872px"></div>
<div class="fline" style="top:911px"></div>
<div class="cdiv" style="top:872px"></div>
<div class="t" style="left:548px;top:879.1px;font-size:27px;color:#c9c9c9;font-weight:normal;">Name/Description</div>
<div class="t" style="left:548px;top:919.1px;font-size:27px;color:#c9c9c9;font-weight:normal;letter-spacing:0.12px;">Media Network Configuration</div>
<div class="lrow" style="top:952px"></div>
<div class="fline" style="top:991px"></div>
<div class="t" style="left:548px;top:959.1px;font-size:27px;color:#c9c9c9;font-weight:normal;letter-spacing:0.2px;">Video Output Configuration</div>
<div class="t" style="left:588px;top:999.1px;font-size:27px;color:#c9c9c9;font-weight:normal;">Resolution</div>
<div class="t" style="left:1124px;top:999.1px;font-size:27px;color:#c9c9c9;font-weight:normal;letter-spacing:0.4px;">3840x2160p</div>
<div class="lrow" style="top:1032px"></div>
<div class="fline" style="top:1071px"></div>
<div class="cdiv" style="top:1032px"></div>
<div class="t" style="left:588px;top:1039.1px;font-size:27px;color:#c9c9c9;font-weight:normal;">Frame Rate</div>
<div class="t" style="left:1124px;top:1039.1px;font-size:27px;color:#c9c9c9;font-weight:normal;letter-spacing:0.6px;">60</div>
<div class="t" style="left:588px;top:1079.1px;font-size:27px;color:#c9c9c9;font-weight:normal;">Color Depth</div>
<div class="t" style="left:1124px;top:1079.1px;font-size:27px;color:#c9c9c9;font-weight:normal;letter-spacing:0.25px;">10-bit</div>
<div class="lrow" style="top:1112px"></div>
<div class="fline" style="top:1151px"></div>
<div class="cdiv" style="top:1112px"></div>
<div class="t" style="left:588px;top:1119.1px;font-size:27px;color:#c9c9c9;font-weight:normal;">Chroma</div>
<div class="t" style="left:1124px;top:1119.1px;font-size:27px;color:#c9c9c9;font-weight:normal;letter-spacing:0.3px;">4:2:2</div>
<div class="t" style="left:508px;top:1159.1px;font-size:27px;color:#c9c9c9;font-weight:normal;letter-spacing:-0.28px;">Slot 2 (BX-16A)</div>
<div class="lrow" style="top:1192px"></div>
<div class="fline" style="top:1231px"></div>
<div class="cdiv" style="top:1192px"></div>
<div class="t" style="left:548px;top:1199.1px;font-size:27px;color:#c9c9c9;font-weight:normal;">Name/Description</div>
<div class="t" style="left:548px;top:1239.1px;font-size:27px;color:#c9c9c9;font-weight:normal;letter-spacing:0.12px;">Media Network Configuration</div>
<div class="lrow" style="top:1272px"></div>
<div class="fline" style="top:1311px"></div>
<div class="t" style="left:548px;top:1279.1px;font-size:27px;color:#c9c9c9;font-weight:normal;letter-spacing:0.13px;">Audio Output Configuration</div>
<div class="t" style="left:588px;top:1319.1px;font-size:27px;color:#c9c9c9;font-weight:normal;letter-spacing:-0.5px;">Sample Rate</div>
<div class="t" style="left:1124px;top:1319.1px;font-size:27px;color:#c9c9c9;font-weight:normal;">48 kHz</div>
<svg class="abs" width="1838" height="1622" style="left:0;top:0"><path d="M576,571 L590,571 L583,579 Z" fill="#a8a8a8"/><path d="M722,571 L736,571 L729,579 Z" fill="#a8a8a8"/><path d="M868,571 L882,571 L875,579 Z" fill="#a8a8a8"/><path d="M1014,571 L1028,571 L1021,579 Z" fill="#a8a8a8"/><path d="M1160,571 L1174,571 L1167,579 Z" fill="#a8a8a8"/><path d="M1306,571 L1320,571 L1313,579 Z" fill="#a8a8a8"/><path d="M1452,571 L1466,571 L1459,579 Z" fill="#a8a8a8"/><path d="M1598,571 L1612,571 L1605,579 Z" fill="#a8a8a8"/><path d="M476,688 L490,688 L483,696 Z" fill="#a8a8a8"/><path d="M516,728 L530,728 L523,736 Z" fill="#a8a8a8"/><path d="M476,848 L490,848 L483,856 Z" fill="#a8a8a8"/><path d="M518,926 L526,933 L518,940 Z" fill="#a8a8a8"/><path d="M516,968 L530,968 L523,976 Z" fill="#a8a8a8"/><path d="M476,1168 L490,1168 L483,1176 Z" fill="#a8a8a8"/><path d="M518,1246 L526,1253 L518,1260 Z" fill="#a8a8a8"/><path d="M516,1288 L530,1288 L523,1296 Z" fill="#a8a8a8"/></svg>
<div class="btn" style="left:1526px;top:1540px;width:93px;height:56px"></div>
<div class="btn" style="left:1632px;top:1540px;width:108px;height:56px"></div>
<div class="btn" style="left:1752px;top:1540px;width:62px;height:56px;border-color:#7a7a7a"></div>
<div class="t" style="left:1539px;top:1556.1px;font-size:27px;color:#c9c9c9;font-weight:normal;">Apply</div>
<div class="t" style="left:1644px;top:1556.1px;font-size:27px;color:#c9c9c9;font-weight:normal;letter-spacing:-0.45px;">Cancel</div>
<div class="t" style="left:1764px;top:1556.1px;font-size:27px;color:#c9c9c9;font-weight:normal;letter-spacing:-2.8px;">OK</div>
</body></html>
